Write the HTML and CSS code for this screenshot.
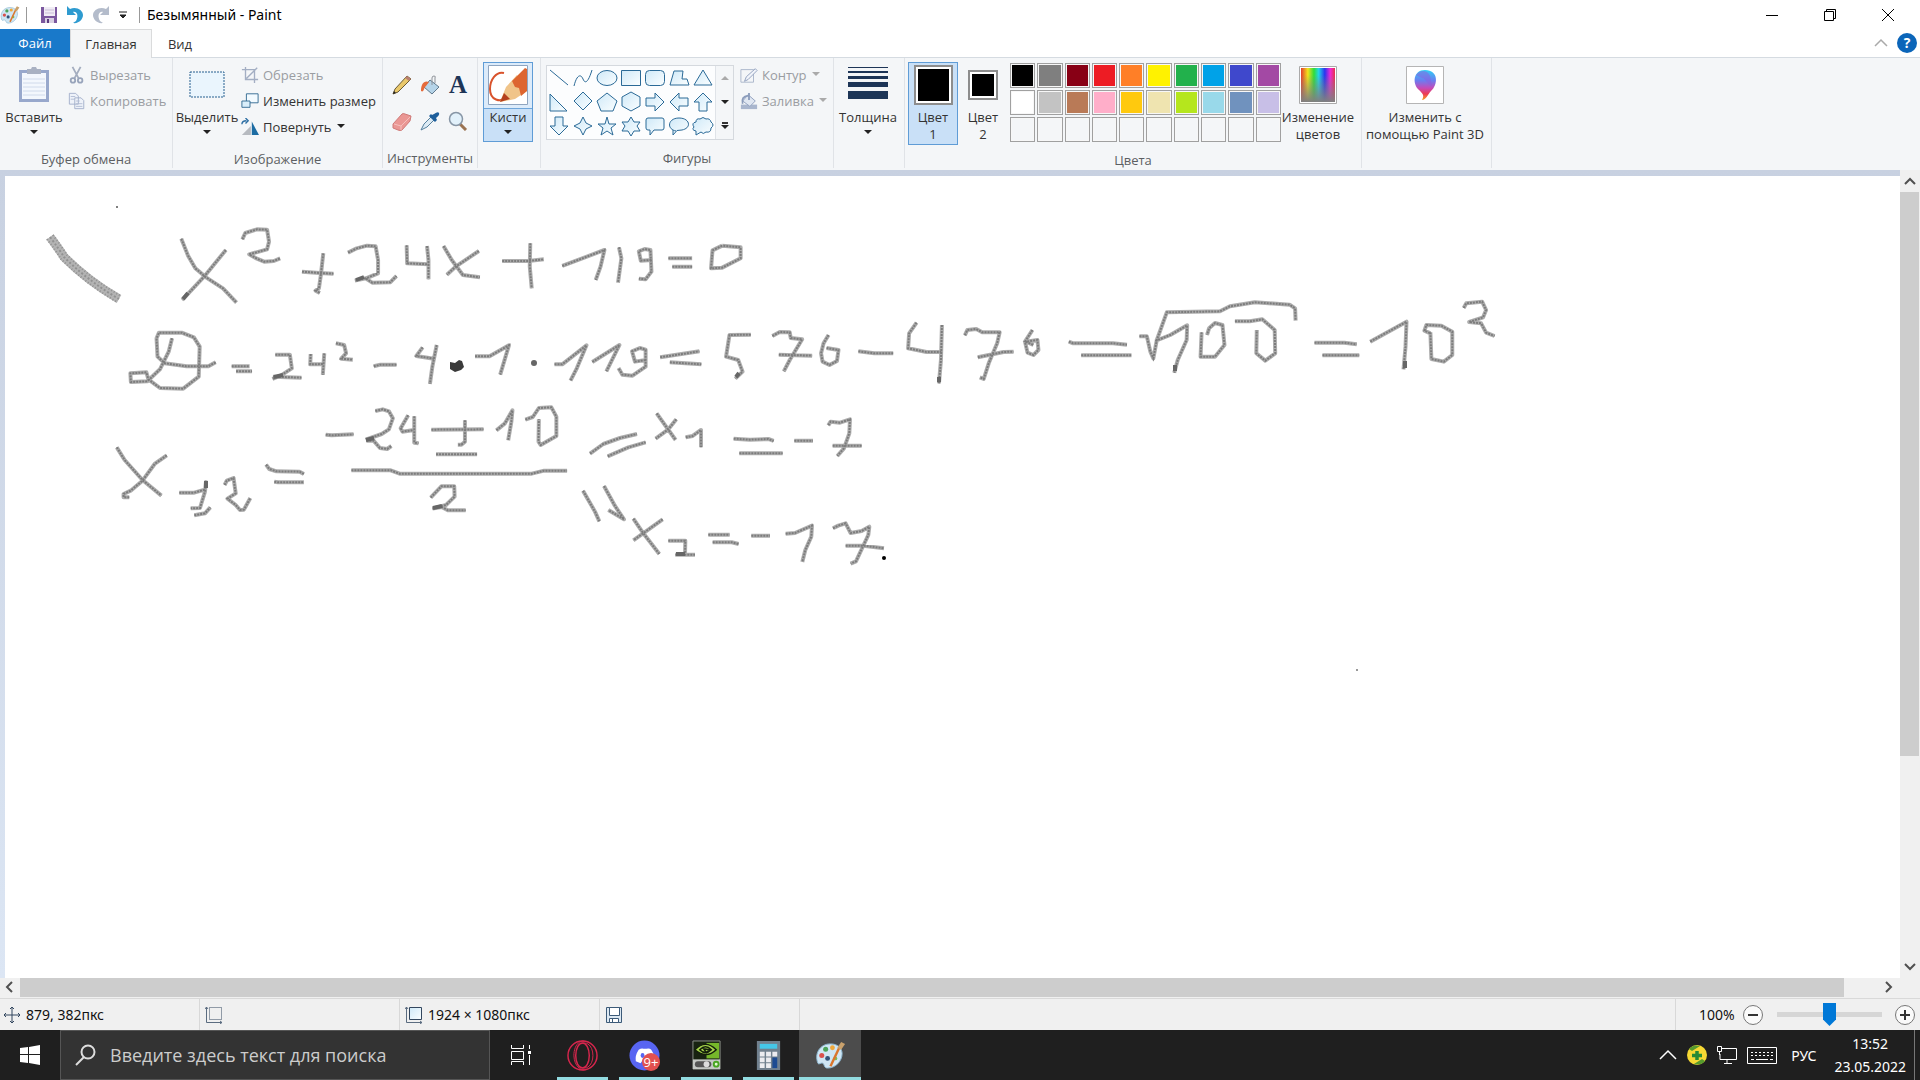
FILE: index.html
```html
<!DOCTYPE html>
<html lang="ru">
<head>
<meta charset="utf-8">
<title>Безымянный - Paint</title>
<link rel="stylesheet" href="styles.css">
</head>
<body>
<svg class="defs" aria-hidden="true">
  <defs>
    <linearGradient id="pale" x1="0" y1="0" x2="1" y2="1"><stop offset="0" stop-color="#cfe9f8"/><stop offset="1" stop-color="#fbfeff"/></linearGradient>
    <linearGradient id="rainbow"><stop offset="0" stop-color="#e33b2e"/><stop offset=".2" stop-color="#f3e21b"/><stop offset=".38" stop-color="#2fdc3a"/><stop offset=".52" stop-color="#22d5e8"/><stop offset=".7" stop-color="#2a35ee"/><stop offset=".86" stop-color="#ee28d8"/><stop offset="1" stop-color="#e8304a"/></linearGradient>
    <linearGradient id="greyfall" x1="0" y1="0" x2="0" y2="1"><stop offset=".2" stop-color="#808080" stop-opacity="0"/><stop offset="1" stop-color="#808080"/></linearGradient>
    <linearGradient id="drop" x1="0" y1="0" x2="0" y2="1"><stop offset="0" stop-color="#2fd0f5"/><stop offset=".35" stop-color="#6b7df0"/><stop offset=".6" stop-color="#c54bb8"/><stop offset=".8" stop-color="#ee3b52"/><stop offset="1" stop-color="#f6a623"/></linearGradient>
    <symbol id="palette" viewBox="0 0 32 32">
      <path d="M3 24C-1 14 5 4 16 4c8 0 12 5 12 10 0 8-7 15-15 15-4 0-3-4-5-5s-4 2-5 0z" fill="#cfe6f4" stroke="#8db8d2"/>
      <circle cx="7" cy="16" r="2.6" fill="#d8504d"/><circle cx="11" cy="9.500" r="2.600" fill="#4ba35a"/><circle cx="18" cy="8" r="2.500" fill="#f0a93c"/><circle cx="13" cy="19" r="2.500" fill="#31527a"/><circle cx="21" cy="19" r="2" fill="#7dbb58"/>
      <path d="M16 27 25 8" stroke="#d9762d" stroke-width="2.500"/><path d="m23 8 4-6 4 2-4 6z" fill="#c9a16c"/>
    </symbol>
  </defs>
</svg>

<header class="titlebar">
  <svg class="app-icon" viewBox="0 0 32 32"><use href="#palette"/></svg>
  <span class="bar"></span>
  <button class="quick" aria-label="Сохранить"><svg width="18" height="18" viewBox="0 0 18 18"><path d="M1 1h16v16H1z" fill="#7b589f"/><path d="M4 1h11v9H4z" fill="#f0ecf5"/><path d="M5 4h9M5 7h9" stroke="#c9bdd8"/><path d="M5 12h9v5H5z" fill="#d8d0e2"/><path d="M7 13h2v4H7z" fill="#5d3d80"/></svg></button>
  <button class="quick" aria-label="Отменить"><svg width="18" height="18" viewBox="0 0 18 18"><path d="M1 0v9h9L7 6c4-1 6 4 3 9l-3 2c6 1 10-4 10-8C17 4 10 0 4 3z" fill="#2e9bd0"/></svg></button>
  <button class="quick" aria-label="Повторить"><svg width="18" height="18" viewBox="0 0 18 18"><path d="M17 0v9H8l3-3c-4-1-6 4-3 9l3 2C5 18 1 13 1 9c0-5 7-9 13-6z" fill="#b4bccb"/></svg></button>
  <button class="quick narrow" aria-label="Настройка панели"><svg width="8" height="8" viewBox="0 0 8 8"><path d="M0 1h8M1 4h6L4 7z" stroke="#222" fill="#222"/></svg></button>
  <span class="bar late"></span>
  <h1>Безымянный - Paint</h1>
  <div class="window-buttons">
    <button aria-label="Свернуть"><svg width="14" height="14" viewBox="0 0 14 14"><path d="M1 7.500h12" stroke="#000"/></svg></button>
    <button aria-label="Свернуть в окно"><svg width="14" height="14" viewBox="0 0 14 14"><path d="M1.500 3.500h9v9h-9zM3.500 3.500v-2h9v9h-2" fill="none" stroke="#000"/></svg></button>
    <button aria-label="Закрыть"><svg width="14" height="14" viewBox="0 0 14 14"><path d="m1 1 12 12M13 1 1 13" stroke="#000"/></svg></button>
  </div>
</header>

<nav class="tabs">
  <button class="tab file">Файл</button>
  <button class="tab active">Главная</button>
  <button class="tab">Вид</button>
  <div class="tabs-end">
    <svg width="14" height="14" viewBox="0 0 14 14"><path d="m1 10 6-6 6 6" fill="none" stroke="#aaa" stroke-width="1.500"/></svg>
    <button class="help" aria-label="Справка">?</button>
  </div>
</nav>

<section class="ribbon">
  <div class="group clipboard">
    <div class="tools">
      <button class="big"><svg width="36" height="38" viewBox="0 0 36 38"><path d="M3 4h30v32H3z" fill="#98a8cc"/><path d="M6 7h24v26H6z" fill="#f3f7fd"/><path d="M11 3h4l1-2h4l1 2h4v5H11z" fill="#a9b1c2"/><path d="M7 13h22M7 17h22M7 21h22M7 25h22M7 29h22" stroke="#d0daeb"/></svg><span>Вставить</span><i class="arrow"></i></button>
      <div class="stack">
        <button class="small" disabled><svg viewBox="0 0 20 20"><path d="m5 1 7 13M14 1 7 14" stroke="#a4adbf" stroke-width="2"/><circle cx="5.500" cy="16" r="2.500" fill="none" stroke="#98a4bb" stroke-width="2"/><circle cx="13.500" cy="16" r="2.500" fill="none" stroke="#98a4bb" stroke-width="2"/></svg>Вырезать</button>
        <button class="small" disabled><svg viewBox="0 0 20 20"><path d="M1.500 1.500h7l3 3v9h-10zM7.500 6.500h7l3 3v9h-10z" fill="#eef2f9" stroke="#a2aec9"/><path d="M3 5h5M3 8h4M9 10h4M9 13h7M9 16h7" stroke="#b0bbd3"/></svg>Копировать</button>
      </div>
    </div>
    <h2>Буфер обмена</h2>
  </div>
  <div class="group image">
    <div class="tools">
      <button class="big"><svg width="36" height="38" viewBox="0 0 36 38"><path d="M1 6h34v25H1z" fill="#eaf5fd" stroke="#255f8f" stroke-dasharray="2 1"/></svg><span>Выделить</span><i class="arrow"></i></button>
      <div class="stack">
        <button class="small" disabled><svg viewBox="0 0 20 20"><path d="M5 1v14h14M1 4h14v15M6 14 18 2" fill="none" stroke="#a3aec3" stroke-width="1.500"/></svg>Обрезать</button>
        <button class="small"><svg viewBox="0 0 20 20"><path d="M6 2h13v10H6z" fill="#f2faff" stroke="#2c668f"/><path d="M1 10h9v7H1z" fill="#d9eefa" stroke="#2c668f"/></svg>Изменить размер</button>
        <button class="small"><svg viewBox="0 0 20 20"><path d="m12 4 8 15h-8z" fill="#1c6ca3"/><path d="M11 9v10H1z" fill="#b6bac0"/><path d="M1 7c0-3 2-4 5-4M5 0l3 3-3 3" fill="none" stroke="#2c6ea3" stroke-width="1.500"/></svg>Повернуть<i class="arrow"></i></button>
      </div>
    </div>
    <h2>Изображение</h2>
  </div>
  <div class="group instruments">
    <div class="tools icon-grid">
      <button aria-label="Карандаш"><svg viewBox="0 0 20 20"><path d="m1 19 2-5L15 1l4 3L6 17z" fill="#e9c86b" stroke="#6a5a35"/><path d="m1 19 1-3 2 2z" fill="#222"/><path d="m15 1 4 3-2 2-4-3z" fill="#b98073"/></svg></button>
      <button aria-label="Заливка цветом"><svg viewBox="0 0 20 20"><path d="m10 5 9 7-7 7-8-7z" fill="#b5d4e9" stroke="#60798c"/><path d="M12 10V3q0-2 2-2t1 2v5" fill="none" stroke="#8d9299"/><path d="M9 7C4 5 1 9 1 16c3 2 3-4 5-5z" fill="#e56a3b"/></svg></button>
      <button aria-label="Текст" class="letter">A</button>
      <button aria-label="Ластик"><svg viewBox="0 0 20 20"><path d="m1 13 9-10q1-1 3 0l6 2-1 5-8 9q-2 1-4 0l-5-2z" fill="#ea9794" stroke="#cf7a78"/><path d="m2 13 7 2 9-9M9 15v4" fill="none" stroke="#f5c0bd"/></svg></button>
      <button aria-label="Палитра"><svg viewBox="0 0 20 20"><path d="m1 19 3-6 7-7 3 3-7 7z" fill="#dceaf4" stroke="#55809d"/><path d="m9 5 6 6 2-2-1-2q4-3 3-5t-5 1l-2 1-1-1z" fill="#1d5e9b"/></svg></button>
      <button aria-label="Масштаб"><svg viewBox="0 0 20 20"><path d="m12 13 6 6" stroke="#9a7352" stroke-width="3"/><circle cx="8" cy="8" r="6.500" fill="#e2f1fb" stroke="#8796a6" stroke-width="1.500"/></svg></button>
    </div>
    <h2>Инструменты</h2>
  </div>
  <div class="group brushes">
    <div class="tools">
      <button class="big selected"><svg width="40" height="40" viewBox="0 0 40 40"><path d="M.5.5h39v39H.5z" fill="#fff" stroke="#8fa5c0"/><path d="M16 8C8 6 2 15 2 24c0 12 11 13 15 9" fill="none" stroke="#d9532c" stroke-width="2"/><path d="M12 37 18 22 29 10l10 16-12 8z" fill="#f0c489"/><path d="m24 16 13-13 2 1v22l-6 5-2-8-4-1z" fill="#dd6530"/><path d="m12 37 4-9 6 6z" fill="#b5401d"/></svg><span>Кисти</span><i class="arrow"></i></button>
    </div>
  </div>
  <div class="group shapes">
    <div class="tools">
      <div class="gallery">
        <div class="shape-grid">
          <svg viewBox="0 0 24 24"><path d="m3 4 18 15"/></svg>
          <svg viewBox="0 0 24 24"><path d="M3 20C6 8 10 8 12 13s5 4 9-9"/></svg>
          <svg viewBox="0 0 24 24"><ellipse cx="12" cy="12" rx="10" ry="7.500"/></svg>
          <svg viewBox="0 0 24 24"><path d="M2.500 4.500h19v15h-19z"/></svg>
          <svg viewBox="0 0 24 24"><rect x="2.500" y="4.500" width="19" height="15" rx="4"/></svg>
          <svg viewBox="0 0 24 24"><path d="M7 5h9l-1 8h5l2 6H3z"/></svg>
          <svg viewBox="0 0 24 24"><path d="m12 4 9 15H3z"/></svg>
          <svg viewBox="0 0 24 24"><path d="m3 4 17 17H3z"/></svg>
          <svg viewBox="0 0 24 24"><path d="m12 2 9 9-9 9-9-9z"/></svg>
          <svg viewBox="0 0 24 24"><path d="m12 3 10 8-4 10H6L2 11z"/></svg>
          <svg viewBox="0 0 24 24"><path d="m12 2 9 5v9l-9 5-9-5V7z"/></svg>
          <svg viewBox="0 0 24 24"><path d="M3 8h9V3l9 9-9 9v-5H3z"/></svg>
          <svg viewBox="0 0 24 24"><path d="M21 8h-9V3l-9 9 9 9v-5h9z"/></svg>
          <svg viewBox="0 0 24 24"><path d="M8 21v-9H3l9-9 9 9h-5v9z"/></svg>
          <svg viewBox="0 0 24 24"><path d="M8 3v9H3l9 9 9-9h-5V3z"/></svg>
          <svg viewBox="0 0 24 24"><path d="m12 3 3 6 6 3-6 3-3 6-3-6-6-3 6-3z"/></svg>
          <svg viewBox="0 0 24 24"><path d="m12 3 2 7h7l-5 4 2 7-6-4-6 4 2-7-5-4h7z"/></svg>
          <svg viewBox="0 0 24 24"><path d="m12 3 3 5h6l-3 4 3 5h-6l-3 5-3-5H3l3-5-3-4h6z"/></svg>
          <svg viewBox="0 0 24 24"><path d="M5 4h14q2 0 2 2v8q0 2-2 2h-8l-4 5v-5H5q-2 0-2-2V6q0-2 2-2z"/></svg>
          <svg viewBox="0 0 24 24"><path d="M9 17C-1 15 1 4 12 4s13 10 3 12l-5 .5L6 21v-5"/></svg>
          <svg viewBox="0 0 24 24"><path d="M5 8q0-4 4-3 3-3 6 0 4-1 5 3 4 3 0 6 0 5-5 4-3 3-5 0l-5 3v-4q-5-1-2-4-3-4 2-5z"/></svg>
        </div>
        <div class="gallery-scroll"><i class="arrow up"></i><i class="arrow"></i><i class="arrow lined"></i></div>
      </div>
      <div class="stack">
        <button class="small" disabled><svg viewBox="0 0 20 20"><path d="M1 4h14v14H1z" fill="none" stroke="#a7b3c8"/><path d="m5 17 2-5L17 3l2 2L9 15z" fill="#f1f4fa" stroke="#8d9dbb"/></svg>Контур<i class="arrow"></i></button>
        <button class="small" disabled><svg viewBox="0 0 20 20"><path d="M1 14h18v5H1z" fill="#a9b6ce"/><path d="m9 3 8 7-6 6-8-6z" fill="#e0e7f2" stroke="#8b9cbb"/><path d="M10 9V1M9 4Q1 5 3 13" fill="none" stroke="#8b9cbb" stroke-width="2"/></svg>Заливка<i class="arrow"></i></button>
      </div>
    </div>
    <h2>Фигуры</h2>
  </div>
  <div class="group thickness">
    <div class="tools">
      <button class="big"><svg width="40" height="38" viewBox="0 0 40 38"><path d="M0 1h40v1H0zM0 5h40v2H0zM0 10h40v3H0zM0 16h40v5H0zM0 25h40v8H0z" fill="#1d3557"/></svg><span>Толщина</span><i class="arrow"></i></button>
    </div>
  </div>
  <div class="group colors">
    <div class="tools">
      <button class="big color-pick selected"><b class="swatch"></b><span>Цвет<br>1</span></button>
      <button class="big color-pick second"><b class="swatch"></b><span>Цвет<br>2</span></button>
      <div class="palette">
        <button class="k1" aria-label="Черный"></button><button class="k2" aria-label="Серый"></button><button class="k3" aria-label="Темно-красный"></button><button class="k4" aria-label="Красный"></button><button class="k5" aria-label="Оранжевый"></button><button class="k6" aria-label="Желтый"></button><button class="k7" aria-label="Зеленый"></button><button class="k8" aria-label="Бирюзовый"></button><button class="k9" aria-label="Индиго"></button><button class="k10" aria-label="Лиловый"></button>
        <button class="k11" aria-label="Белый"></button><button class="k12" aria-label="Светло-серый"></button><button class="k13" aria-label="Коричневый"></button><button class="k14" aria-label="Розовый"></button><button class="k15" aria-label="Золотой"></button><button class="k16" aria-label="Светло-желтый"></button><button class="k17" aria-label="Лайм"></button><button class="k18" aria-label="Светло-бирюзовый"></button><button class="k19" aria-label="Сизый"></button><button class="k20" aria-label="Бледно-лиловый"></button>
        <button></button><button></button><button></button><button></button><button></button><button></button><button></button><button></button><button></button><button></button>
      </div>
      <button class="big edit-colors"><svg width="38" height="38" viewBox="0 0 38 38"><path d="M.5.500h37v37H.5z" fill="#fff" stroke="#aaa"/><path d="M2 2h34v34H2z" fill="url(#rainbow)"/><path d="M2 2h34v34H2z" fill="url(#greyfall)"/></svg><span>Изменение<br>цветов</span></button>
    </div>
    <h2>Цвета</h2>
  </div>
  <div class="group paint3d">
    <div class="tools">
      <button class="big"><svg width="38" height="38" viewBox="0 0 38 38"><path d="M.5.500h37v37H.5z" fill="#fff" stroke="#b5b5b5"/><path d="M19 4c14 0 13 15 6 21-3 3-5 9-9 9 3-5 0-7-3-10C6 18 7 4 19 4z" fill="url(#drop)"/><path d="M10 9q5-6 11-3c5 4 3 9 5 14-4 0-6-8-10-8z" fill="#8f5ce0" opacity=".5"/></svg><span>Изменить с<br>помощью Paint 3D</span></button>
    </div>
  </div>
</section>

<main class="workspace">
  <div class="viewport">
    <svg class="canvas" width="1924" height="1080" viewBox="5 176 1924 1080" role="img" aria-label="Решение квадратного уравнения">
      <defs><g id="strokes">
        <g transform="translate(0 180) scale(.4847 .3333)">
          <path d="M374 176 388 227 403 265 425 292 460 325 488 368M466 210 421 290 376 360M500 178 506 159 530 148 551 149 555 185 551 208 514 223 530 236 545 245 565 243 578 235M623 275 660 279 688 281M667 220 662 285 658 325 651 332 660 339M718 218 736 205 757 197 775 199 780 240 780 280 755 295 732 302M755 296 768 308 805 307 818 288M839 196 840 250 884 253M881 198 884 240 884 298M915 198 932 240 955 285 990 292M988 213 940 260 922 284M1036 243H1090L1122 238M1094 190 1093 260 1097 325M1160 258 1247 210 1239 260 1229 300M1277 202 1282 235 1275 308M1344 240 1322 242 1318 214 1330 207 1342 210 1344 275 1332 298 1318 296M1379 235H1428M1387 260H1428M1490 197 1470 211 1467 265 1490 263 1528 235V202L1490 197"/>
          <path d="M355 475 348 515 330 568 304 604 270 606 269 580 302 577 306 598 330 624 378 626 410 590 412 500 400 472 375 458 328 458 323 475 325 530 340 550 385 559H430L445 547M478 559H515M487 574H520M568 524 598 524 602 565 580 586 562 597M563 590 622 593M641 522 640 553 668 552M669 520 666 585M693 490 710 495 714 520 704 536 728 539M771 559 785 554H818M872 502 859 528 895 536M901 495 892 560 887 612M980 529H1010L1050 496 1032 584M1144 553H1160L1210 496 1190 565 1177 602M1222 546 1278 495 1251 574M1332 540 1310 545 1304 514 1320 504 1332 509V560L1305 587 1284 584 1276 564M1362 532 1443 514M1382 547 1447 553M1549 464 1505 465 1498 530 1523 540 1532 575 1517 596"/>
        </g>
        <g transform="translate(740 280) scale(.4974 .3333)">
          <path d="M65 168 80 156 100 157 102 174 125 178 100 240 88 274M78 224 145 227M178 165 168 190 163 220 166 245 180 255 195 243 198 210 174 204M238 214 270 220H308M355 128 340 160 338 205 375 216 405 216M406 135 404 240 400 310M452 166 457 150 475 147 487 157 522 157 517 190 500 250 490 297 482 292M478 232 530 216 550 215M588 150 573 185 578 218 590 225 600 210 598 180 575 185 590 195M661 185 670 190 750 190 778 194M686 226H787M803 169H818L825 215 831 235 838 180 858 97 965 94 985 79 1035 67 1105 74 1116 85 1117 122M835 183 865 165 899 136 898 180 880 240 873 278M928 157 926 230 955 230 974 195 970 135 955 129 943 145 939 165M995 124H1025L1050 118 1075 150 1076 220 1056 242 1038 220 1039 150M1155 188H1215L1240 193M1171 226H1245M1267 185 1340 125 1338 200 1334 268M1388 157 1390 237 1415 245 1432 225V155L1410 137 1380 135 1376 152 1388 160M1455 84 1460 70 1492 65 1500 90 1494 112 1466 126 1490 130 1500 158 1517 168"/>
        </g>
        <g transform="translate(80 380) scale(.3571 .3333)">
          <path d="M103 202 125 240 175 300 228 347M243 226 209 252 175 302 142 332 122 342 122 352 138 352M278 338H320L352 328M353 302 350 335 336 384 310 385M320 406 350 400 365 382M405 315 411 302 430 294 436 340 413 356 436 375 448 390 459 389 477 354M521 254 530 267 550 274 615 275 627 282M544 305 555 307H627M688 164 705 166 766 163M827 93 848 88 865 94 876 115 865 148 845 162 800 179M802 182H822L840 204 860 207 872 198M919 106 898 145 903 155 935 150M936 109V188L948 190M984 149 1130 148M1078 121V185L1068 194H1058M997 223H1112M1166 151 1190 130 1211 91 1208 125 1199 181M1247 119 1268 111 1285 84 1320 82 1334 110V168L1290 195 1284 185 1285 118M760 271H870L895 281 1265 281 1300 272H1364M982 353 1012 319H1048L1049 350 1025 375 987 386M987 386 1013 381 1030 391H1080"/>
        </g>
        <g transform="translate(560 390) scale(.3333)">
          <path d="M90 191 130 162 180 144 231 132M143 199 205 172 257 157M290 70 347 150M349 88 325 118 287 146M377 142 398 138 423 120V172M521 146 570 149 625 147 641 153M538 190H668M703 152H759M805 106 812 95 840 98 870 88 868 130 852 175 832 198M818 167H905M69 302 105 365 118 394M132 288 165 348 192 388 145 360M220 386 250 430 298 492M308 388 220 451M325 452H376L375 494M346 494H405M445 434H509M458 457 515 457 536 462M574 437H630M677 431 705 429 756 407 754 440 736 480 727 516M819 415 835 407 857 400 872 429 905 423 928 410 925 435 888 514 872 521M857 467H910L972 475"/>
        </g>
      </g></defs>
      <use href="#strokes" class="pencil"/>
      <use href="#strokes" class="grain"/>
      <path d="M50 237Q59 249 64 257Q88 281 119 299" fill="none" stroke="#b3b3b3" stroke-width="9"/>
      <path d="M50 237Q59 249 64 257Q88 281 119 299" fill="none" stroke="#919191" stroke-width="2" stroke-dasharray="2 2"/>
      <path d="M47 239Q56 251 61 259Q85 283 117 302M53 235Q62 247 67 255Q91 279 121 296" fill="none" stroke="#919191" stroke-width="2" stroke-dasharray="1 2"/>
      <path class="dark" d="m183 299 5-6M356 280l8-3M274 377l9-2M366 440l8-2M433 508l9-2M676 554h9M206 481v7M1175 371v-6M939 382v-5M1405 368v-7M736 377l3-4"/>
      <path d="m450 362 5 1 4-3 3 1 2 6-3 3-6 2-5-3z" fill="#3a3a3a"/><circle cx="534" cy="363" r="3" fill="#666"/>
      <circle cx="884" cy="558" r="2"/><circle cx="117" cy="207" r="1" fill="#555"/><circle cx="1357" cy="670" r="1" fill="#777"/>
    </svg>
  </div>
  <div class="scroll vertical">
    <svg viewBox="0 0 20 20"><path d="m5 12 5-5 5 5"/></svg><span class="thumb"></span><svg viewBox="0 0 20 20"><path d="m5 6 5 5 5-5"/></svg>
  </div>
  <div class="scroll horizontal">
    <svg viewBox="0 0 20 20"><path d="m12 4-5 5 5 5"/></svg><span class="thumb"></span><svg viewBox="0 0 20 20"><path d="m6 4 5 5-5 5"/></svg>
  </div>
</main>

<footer class="status">
  <div class="cell"><svg width="18" height="18" viewBox="0 0 18 18"><path d="M9 1v16M1 9h16M7 3l2-2 2 2M7 15l2 2 2-2M3 7 1 9l2 2M15 7l2 2-2 2" fill="none" stroke="#33475f"/></svg>879, 382пкс</div>
  <div class="cell"><svg width="18" height="18" viewBox="0 0 18 18"><path d="M4.500 1.500h12v12h-12z" fill="none" stroke="#33475f" stroke-dasharray="1 1"/><path d="M1.500 1v15.500H17M0 3l1.500-2L3 3M15 15l2 1.500-2 1.500" fill="none" stroke="#5b6c80"/></svg></div>
  <div class="cell"><svg width="18" height="18" viewBox="0 0 18 18"><path d="M4.500 1.500h12v12h-12z" fill="url(#pale)" stroke="#33475f"/><path d="M1.500 1v15.500H17M0 3l1.500-2L3 3M15 15l2 1.500-2 1.500" fill="none" stroke="#5b6c80"/></svg>1924 × 1080пкс</div>
  <div class="cell"><svg width="18" height="18" viewBox="0 0 18 18"><path d="M1.500 1.500h15v15h-15z" fill="#dce8f2" stroke="#3c5a78"/><path d="M4.500 1.500h10v8h-10zM4.500 12.500h9v4h-9zM7.500 13v3" fill="#fff" stroke="#3c5a78"/></svg></div>
  <div class="zoom">
    <label for="zoom">100%</label>
    <button aria-label="Уменьшить"><svg viewBox="0 0 20 20"><circle cx="10" cy="10" r="9.500"/><path d="M5 10h10"/></svg></button>
    <input id="zoom" type="range" min="0" max="100" value="50">
    <button aria-label="Увеличить"><svg viewBox="0 0 20 20"><circle cx="10" cy="10" r="9.500"/><path d="M5 10h10M10 5v10"/></svg></button>
  </div>
</footer>

<nav class="taskbar">
  <button class="start" aria-label="Пуск"><svg width="20" height="20" viewBox="0 0 20 20"><path d="m0 3 8-1v7H0zM9 2l11-2v9H9zM0 10h8v8l-8-1zM9 10h11v10L9 18z" fill="#fff"/></svg></button>
  <label class="search"><svg width="22" height="22" viewBox="0 0 22 22"><circle cx="13" cy="8" r="6.500"/><path d="M9 13 1 21"/></svg><input type="text" placeholder="Введите здесь текст для поиска" aria-label="Поиск"></label>
  <button class="task-view" aria-label="Представление задач"><svg width="20" height="20" viewBox="0 0 20 20"><path d="M.5 0v3.500h12V0M.5 6.500h12v8H.5zM.5 20v-3.500h12V20M18.500 0v4M18.500 10v10" fill="none" stroke="#fff"/><path d="M17 6h3v3h-3z" fill="#fff"/></svg></button>
  <button class="app" aria-label="Opera"><svg viewBox="0 0 32 32"><g fill="none" stroke="#d7264d" stroke-width="1.500"><circle cx="16" cy="16" r="15"/><ellipse cx="16" cy="16" rx="7" ry="13"/><path d="M18 1C4 0 3 30 18 31M14 4c17-7 17 31 0 24" stroke-width="1"/></g></svg></button>
  <button class="app" aria-label="Discord"><svg viewBox="0 0 32 32"><circle cx="16" cy="16" r="15.500" fill="#5865f2"/><path d="M10 10q3-2 5-1h3q3-1 5 1 4 6 3 12l-5 2-2-3h-5l-2 3-5-2q-1-6 3-12z" fill="#fff"/><ellipse cx="14" cy="16" rx="2" ry="2.500" fill="#5865f2"/></svg><span class="badge">9+</span></button>
  <button class="app" aria-label="NVIDIA"><svg viewBox="0 0 32 32"><path d="M2 1h28v29H2z" fill="#182311" stroke="#8b9088"/><path d="M16 3h13v16H16z" fill="#76b82a"/><path d="M4 10Q15-1 26 10 16 20 4 10zm5 0q6-6 12 0-6 6-12 0zm4-1 6 1-3 3z" fill="#a6d44a" stroke="#14200b" stroke-width="1.500"/><path d="M2 20h28v10H2z" fill="#c5c8c5"/><rect x="4" y="22" width="17" height="6" rx="3" fill="#555"/><circle cx="16" cy="25" r="3" fill="#ddd"/><circle cx="26" cy="25" r="2.500" fill="#e3f8cf" stroke="#48a522" stroke-width="2"/></svg></button>
  <button class="app" aria-label="Калькулятор"><svg viewBox="0 0 32 32"><path d="M4 1h24v30H4z" fill="#71808e"/><path d="M7 4h18v5H7z" fill="#45c7e9"/><path d="M7 12h5v5H7zm6.500 0h5v5h-5zM20 12h5v5h-5zM7 18h5v5H7zm6.500 0h5v5h-5zM7 24h5v5H7zm6.500 0h5v5h-5z" fill="#ececf0"/><path d="M20 18h5v11h-5z" fill="#1d4b92"/></svg></button>
  <button class="app current" aria-label="Paint"><svg viewBox="0 0 32 32"><use href="#palette"/></svg></button>
  <div class="tray">
    <svg width="18" height="20" viewBox="0 0 18 20"><path d="m1 14 8-8 8 8" stroke-width="1.500"/></svg>
    <svg width="20" height="20" viewBox="0 0 20 20"><circle cx="10" cy="10" r="10" fill="#f6d833" stroke="none"/><path d="M2 4q4-5 11-3L5 6zM18 16q-4 5-11 3l8-5z" fill="#569b2d" stroke="none"/><path d="M10 6v9M5 10.500h10" stroke="#278a35" stroke-width="3.500"/></svg>
    <svg width="20" height="20" viewBox="0 0 20 20"><path d="M5 3.500h14.500v11H3V9M10 15v3M7 18.500h8M.5 1.500h4v5h-4zM2.500 7v3"/></svg>
    <svg width="30" height="20" viewBox="0 0 30 20"><path d="M.5 2.500h29v16H.5z"/><path d="M4 7.500h23M4 10.500h23" stroke-dasharray="2 2"/><path d="M4 14.500h3M9 14.500h12M23 14.500h3"/></svg>
    <span class="lang">РУС</span>
    <time datetime="2022-05-23T13:52">13:52<br>23.05.2022</time>
  </div>
</nav>
</body>
</html>
```
FILE: styles.css
```css
* { box-sizing: border-box; }
body {
  margin: 0;
  height: 100vh;
  display: flex;
  flex-direction: column;
  overflow: hidden;
  background: #fff;
  color: #333;
  font: 13px/17px "Open Sans", "Noto Sans", sans-serif;
}
button { margin: 0; padding: 0; border: 0; background: none; color: inherit; font: inherit; }
h1, h2 { margin: 0; font-weight: 400; }
svg { flex: none; display: block; }
.defs { position: absolute; width: 0; height: 0; }

.titlebar { display: flex; align-items: center; height: 29px; flex: none; }
.app-icon { width: 20px; height: 20px; }
.bar { width: 1px; height: 16px; margin: 0 9px 0 6px; background: #999; }
.bar.late { margin: 0 7px 0 10px; }
.quick { width: 26px; display: flex; justify-content: center; }
.quick.narrow { width: 12px; margin-left: 3px; }
h1 { color: #000; font: 14px/20px "Noto Sans", sans-serif; }
.window-buttons { display: flex; margin-left: auto; padding-right: 3px; }
.window-buttons button { width: 58px; height: 27px; display: flex; align-items: center; justify-content: center; }

.tabs { display: flex; height: 29px; flex: none; border-bottom: 1px solid #d5dbe1; }
.tab { width: 56px; height: 29px; line-height: 28px; }
.tab.file { width: 70px; height: 28px; background: #1979ca; color: #fff; }
.tab.active { width: 82px; border: 1px solid #dadbdc; border-bottom: 0; background: #f5f6f7; line-height: 27px; }
.tabs-end { display: flex; align-items: center; gap: 9px; margin-left: auto; padding-right: 3px; }
.help { width: 20px; height: 20px; border-radius: 50%; background: #0b65b9; color: #fff; font-weight: 700; font-size: 14px; line-height: 20px; }

.ribbon { display: flex; height: 112px; flex: none; background: #f4f6f8; }
.group { flex: none; display: flex; flex-direction: column; border-right: 1px solid #e0e3e7; padding: 4px 0 0; margin-bottom: 2px; }
.tools { display: flex; height: 84px; }
.group h2 { margin-top: 5px; color: #5c5f63; font-size: 13px; line-height: 20px; text-align: center; }
.clipboard { width: 173px; }
.image { width: 210px; }
.instruments { width: 95px; }
.brushes { width: 63px; }
.shapes { width: 293px; }
.thickness { width: 71px; }
.colors { width: 457px; }
.paint3d { width: 130px; }
.big { width: 68px; height: 82px; flex: none; display: flex; flex-direction: column; align-items: center; padding-top: 3px; }
.big > svg { height: 40px; }
.big span { margin-top: 4px; white-space: nowrap; }
.arrow { width: 0; height: 0; border: 4px solid transparent; border-top-color: #222; border-bottom: 0; margin-top: 4px; }
.stack { display: flex; flex-direction: column; }
.small { display: flex; align-items: center; height: 26px; white-space: nowrap; }
.small svg { width: 18px; height: 18px; margin-right: 4px; }
.small .arrow { margin: 0 0 2px 5px; }
.small:disabled { color: #9a9da2; }
.small:disabled .arrow { border-top-color: #aaa; }
.icon-grid { display: grid; grid-template: 36px 36px / 28px 28px 28px; justify-content: center; padding-top: 5px; }
.icon-grid button { display: flex; align-items: center; justify-content: center; }
.icon-grid svg { width: 20px; height: 20px; }
.letter { color: #1d3557; font: 700 25px/30px "Liberation Serif", serif; }
.selected { border: 1px solid #5f9cd6; background: #c9e0f7; }
.brushes .tools { padding-left: 5px; }
.brushes .big { width: 50px; height: 80px; padding-top: 2px; background: linear-gradient(#dcebfa 45px, #6fa6da 45px, #6fa6da 46px, #c9e0f7 46px); }
.gallery { display: flex; width: 188px; height: 75px; margin: 3px 6px 0 5px; border: 1px solid #d5d9de; background: #fcfdfe; }
.shape-grid { display: grid; grid-template: repeat(3, 24px) / repeat(7, 24px); }
.shape-grid svg { width: 24px; height: 24px; fill: url(#pale); stroke: #2b6a97; stroke-width: 1; }
.shape-grid svg:nth-child(-n+2) { fill: none; }
.gallery-scroll { display: flex; flex-direction: column; align-items: center; justify-content: space-around; flex: 1; border-left: 1px solid #dfe3e8; background: #f4f6f8; }
.gallery-scroll .arrow { margin: 0; }
.gallery-scroll .up { border-top: 0; border-bottom: 4px solid #aaa; }
.arrow.lined { box-shadow: 0 -4px 0 -1px #333; }
.color-pick { width: 50px; height: 83px; margin-left: 3px; padding-top: 2px; }
.color-pick + .color-pick { margin-left: 0; padding-top: 3px; }
.swatch { width: 39px; height: 40px; border: 2px solid #8d8d8d; background: #000; box-shadow: inset 0 0 0 2px #fff; }
.second .swatch { width: 30px; height: 30px; margin: 5px 0; }
.palette { display: grid; grid-template: 25px 25px 25px / repeat(10, 1fr); gap: 2px; width: 271px; padding-top: 1px; margin-left: 2px; }
.palette button { border: 1px solid #a0a0a0; box-shadow: inset 0 0 0 1px #f7f7f7; }
.edit-colors { width: 74px; }
.k1 { background: #000; } .k2 { background: #7f7f7f; } .k3 { background: #880015; } .k4 { background: #ed1c24; } .k5 { background: #ff7f27; }
.k6 { background: #fff200; } .k7 { background: #22b14c; } .k8 { background: #00a2e8; } .k9 { background: #3f48cc; } .k10 { background: #a349a4; }
.k11 { background: #fff; } .k12 { background: #c3c3c3; } .k13 { background: #b97a57; } .k14 { background: #ffaec9; } .k15 { background: #ffc90e; }
.k16 { background: #efe4b0; } .k17 { background: #b5e61d; } .k18 { background: #99d9ea; } .k19 { background: #7092be; } .k20 { background: #c8bfe7; }
.paint3d .big { width: 126px; }

.workspace { flex: 1; min-height: 0; display: grid; grid-template: minmax(0, 1fr) 20px / minmax(0, 1fr) 20px; background: #f0f0f0; }
.viewport { overflow: hidden; padding: 6px 0 0 5px; background: linear-gradient(#c8d1e1, #dce6f4); }
.canvas { background: #fff; }
.canvas path { vector-effect: non-scaling-stroke; }
.pencil { fill: none; stroke: #aeaeae; stroke-width: 4; stroke-linejoin: round; }
.grain { fill: none; stroke: #7c7c7c; stroke-width: 2; stroke-dasharray: 2 1; }
.dark { fill: none; stroke: #666; stroke-width: 4; }
.scroll { display: flex; }
.scroll svg { width: 20px; height: 20px; fill: none; stroke: #505050; stroke-width: 2; }
.scroll .thumb { background: #cdcdcd; }
.vertical { flex-direction: column; justify-content: space-between; padding-top: 2px; }
.vertical .thumb { width: 19px; height: 70%; margin-bottom: auto; }
.horizontal .thumb { width: 96%; height: 19px; margin-right: auto; }

.status { display: flex; height: 32px; flex: none; border-top: 1px solid #d9d9d9; background: #f0f0f0; color: #111; font: 14px/20px "Noto Sans", sans-serif; }
.cell { display: flex; align-items: center; gap: 5px; width: 200px; padding: 0 3px; border-right: 1px solid #d8d8d8; }
.cell:nth-child(n+2) { padding-left: 5px; }
.zoom { display: flex; align-items: center; margin-left: auto; padding: 0 5px 0 23px; border-left: 1px solid #d8d8d8; }
.zoom label { width: 44px; }
.zoom svg { width: 20px; height: 20px; fill: #fafafa; stroke: #777; }
.zoom path { stroke: #333; stroke-width: 2; }
.zoom input { appearance: none; width: 105px; height: 24px; margin: 0 13px 0 14px; background: linear-gradient(#d6d6d6, #d6d6d6) center / 100% 5px no-repeat; }
.zoom input::-webkit-slider-thumb { appearance: none; width: 13px; height: 23px; background: #0078d7; clip-path: polygon(0 0, 100% 0, 100% 72%, 50% 100%, 0 72%); }

.taskbar { display: flex; height: 50px; flex: none; background: #1f1f1f; color: #fff; }
.start { width: 60px; display: flex; align-items: center; justify-content: center; }
.search { display: flex; align-items: center; width: 430px; padding: 0 14px; gap: 13px; border: 1px solid #555; background: #333; }
.search svg { fill: none; stroke: #ddd; stroke-width: 2; }
.search input { flex: 1; min-width: 0; padding: 0; border: 0; background: none; font: 18px/24px "Open Sans", "Noto Sans", sans-serif; }
.search input::placeholder { color: #ccc; }
.task-view { width: 61px; display: flex; align-items: center; justify-content: center; }
.app { position: relative; width: 62px; display: flex; align-items: center; justify-content: center; background: linear-gradient(#92dbe0, #92dbe0) center bottom / 51px 3px no-repeat; }
.app svg { width: 31px; height: 31px; }
.app.current { background-color: #4c4c4c; background-size: 100% 3px; }
.badge { position: absolute; right: 15px; bottom: 9px; width: 18px; height: 18px; border-radius: 50%; background: #e2504f; font-size: 13px; line-height: 18px; }
.tray { display: flex; align-items: center; gap: 10px; margin-left: auto; margin-right: 5px; padding-right: 8px; border-right: 1px solid #777; font: 14px/23px "Noto Sans", sans-serif; }
.tray svg { fill: none; stroke: #fff; }
.lang { margin-left: 4px; }
time { margin-left: 8px; text-align: center; }
```
